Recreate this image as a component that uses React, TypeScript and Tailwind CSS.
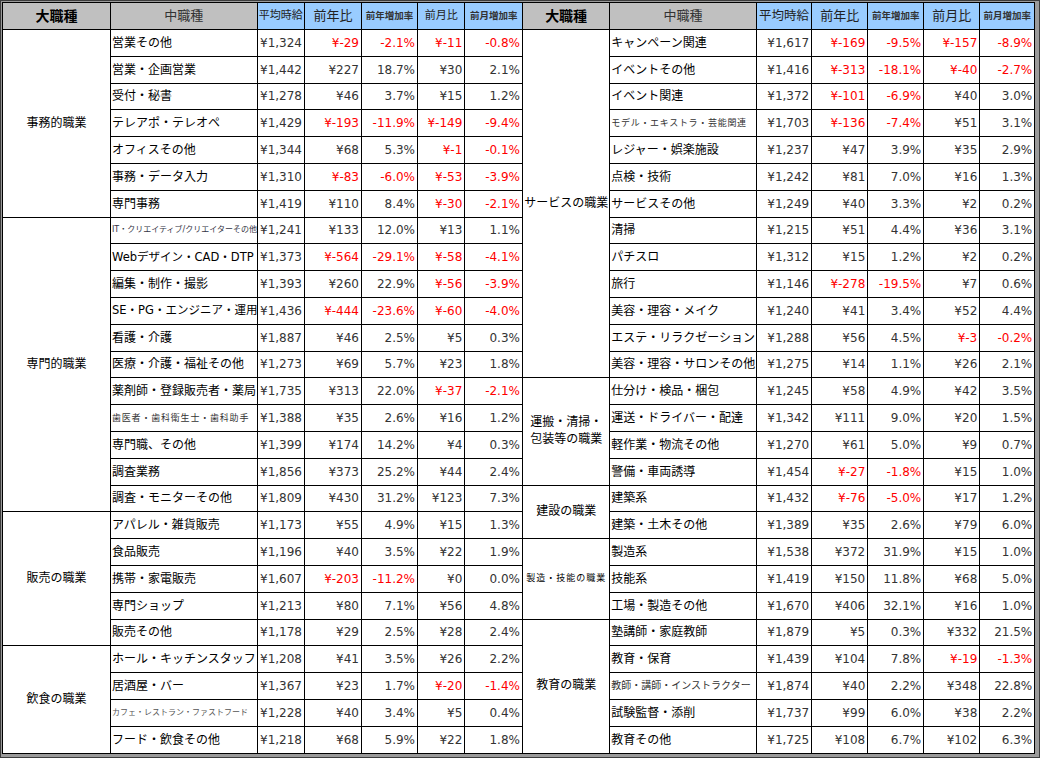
import React from "react";

type Row = [string, string, string, string, string, string];
type Group = { name: React.ReactNode; cls?: string; rows: Row[] };

const leftGroups: Group[] = [
  {
    name: "事務的職業",
    rows: [
      ["営業その他", "¥1,324", "¥-29", "-2.1%", "¥-11", "-0.8%"],
      ["営業・企画営業", "¥1,442", "¥227", "18.7%", "¥30", "2.1%"],
      ["受付・秘書", "¥1,278", "¥46", "3.7%", "¥15", "1.2%"],
      ["テレアポ・テレオペ", "¥1,429", "¥-193", "-11.9%", "¥-149", "-9.4%"],
      ["オフィスその他", "¥1,344", "¥68", "5.3%", "¥-1", "-0.1%"],
      ["事務・データ入力", "¥1,310", "¥-83", "-6.0%", "¥-53", "-3.9%"],
      ["専門事務", "¥1,419", "¥110", "8.4%", "¥-30", "-2.1%"],
    ],
  },
  {
    name: "専門的職業",
    rows: [
      ["IT・クリエイティブ/クリエイターその他", "¥1,241", "¥133", "12.0%", "¥13", "1.1%"],
      ["Webデザイン・CAD・DTP", "¥1,373", "¥-564", "-29.1%", "¥-58", "-4.1%"],
      ["編集・制作・撮影", "¥1,393", "¥260", "22.9%", "¥-56", "-3.9%"],
      ["SE・PG・エンジニア・運用", "¥1,436", "¥-444", "-23.6%", "¥-60", "-4.0%"],
      ["看護・介護", "¥1,887", "¥46", "2.5%", "¥5", "0.3%"],
      ["医療・介護・福祉その他", "¥1,273", "¥69", "5.7%", "¥23", "1.8%"],
      ["薬剤師・登録販売者・薬局", "¥1,735", "¥313", "22.0%", "¥-37", "-2.1%"],
      ["歯医者・歯科衛生士・歯科助手", "¥1,388", "¥35", "2.6%", "¥16", "1.2%"],
      ["専門職、その他", "¥1,399", "¥174", "14.2%", "¥4", "0.3%"],
      ["調査業務", "¥1,856", "¥373", "25.2%", "¥44", "2.4%"],
      ["調査・モニターその他", "¥1,809", "¥430", "31.2%", "¥123", "7.3%"],
    ],
  },
  {
    name: "販売の職業",
    rows: [
      ["アパレル・雑貨販売", "¥1,173", "¥55", "4.9%", "¥15", "1.3%"],
      ["食品販売", "¥1,196", "¥40", "3.5%", "¥22", "1.9%"],
      ["携帯・家電販売", "¥1,607", "¥-203", "-11.2%", "¥0", "0.0%"],
      ["専門ショップ", "¥1,213", "¥80", "7.1%", "¥56", "4.8%"],
      ["販売その他", "¥1,178", "¥29", "2.5%", "¥28", "2.4%"],
    ],
  },
  {
    name: "飲食の職業",
    rows: [
      ["ホール・キッチンスタッフ", "¥1,208", "¥41", "3.5%", "¥26", "2.2%"],
      ["居酒屋・バー", "¥1,367", "¥23", "1.7%", "¥-20", "-1.4%"],
      ["カフェ・レストラン・ファストフード", "¥1,228", "¥40", "3.4%", "¥5", "0.4%"],
      ["フード・飲食その他", "¥1,218", "¥68", "5.9%", "¥22", "1.8%"],
    ],
  },
];

const rightGroups: Group[] = [
  {
    name: "サービスの職業",
    rows: [
      ["キャンペーン関連", "¥1,617", "¥-169", "-9.5%", "¥-157", "-8.9%"],
      ["イベントその他", "¥1,416", "¥-313", "-18.1%", "¥-40", "-2.7%"],
      ["イベント関連", "¥1,372", "¥-101", "-6.9%", "¥40", "3.0%"],
      ["モデル・エキストラ・芸能関連", "¥1,703", "¥-136", "-7.4%", "¥51", "3.1%"],
      ["レジャー・娯楽施設", "¥1,237", "¥47", "3.9%", "¥35", "2.9%"],
      ["点検・技術", "¥1,242", "¥81", "7.0%", "¥16", "1.3%"],
      ["サービスその他", "¥1,249", "¥40", "3.3%", "¥2", "0.2%"],
      ["清掃", "¥1,215", "¥51", "4.4%", "¥36", "3.1%"],
      ["パチスロ", "¥1,312", "¥15", "1.2%", "¥2", "0.2%"],
      ["旅行", "¥1,146", "¥-278", "-19.5%", "¥7", "0.6%"],
      ["美容・理容・メイク", "¥1,240", "¥41", "3.4%", "¥52", "4.4%"],
      ["エステ・リラクゼーション", "¥1,288", "¥56", "4.5%", "¥-3", "-0.2%"],
      ["美容・理容・サロンその他", "¥1,275", "¥14", "1.1%", "¥26", "2.1%"],
    ],
  },
  {
    name: (
      <>
        運搬・清掃・
        <br />
        包装等の職業
      </>
    ),
    rows: [
      ["仕分け・検品・梱包", "¥1,245", "¥58", "4.9%", "¥42", "3.5%"],
      ["運送・ドライバー・配達", "¥1,342", "¥111", "9.0%", "¥20", "1.5%"],
      ["軽作業・物流その他", "¥1,270", "¥61", "5.0%", "¥9", "0.7%"],
      ["警備・車両誘導", "¥1,454", "¥-27", "-1.8%", "¥15", "1.0%"],
    ],
  },
  {
    name: "建設の職業",
    rows: [
      ["建築系", "¥1,432", "¥-76", "-5.0%", "¥17", "1.2%"],
      ["建築・土木その他", "¥1,389", "¥35", "2.6%", "¥79", "6.0%"],
    ],
  },
  {
    name: "製造・技能の職業",
    cls: "text-[9px] tracking-[1px] text-[#333]",
    rows: [
      ["製造系", "¥1,538", "¥372", "31.9%", "¥15", "1.0%"],
      ["技能系", "¥1,419", "¥150", "11.8%", "¥68", "5.0%"],
      ["工場・製造その他", "¥1,670", "¥406", "32.1%", "¥16", "1.0%"],
    ],
  },
  {
    name: "教育の職業",
    rows: [
      ["塾講師・家庭教師", "¥1,879", "¥5", "0.3%", "¥332", "21.5%"],
      ["教育・保育", "¥1,439", "¥104", "7.8%", "¥-19", "-1.3%"],
      ["教師・講師・インストラクター", "¥1,874", "¥40", "2.2%", "¥348", "22.8%"],
      ["試験監督・添削", "¥1,737", "¥99", "6.0%", "¥38", "2.2%"],
      ["教育その他", "¥1,725", "¥108", "6.7%", "¥102", "6.3%"],
    ],
  },
];

// small / squeezed labels, like Excel's shrink-to-fit
const nameCls: Record<string, string> = {
  "IT・クリエイティブ/クリエイターその他": "text-[8px] text-[#334]",
  "Webデザイン・CAD・DTP": "text-[11.5px]",
  "SE・PG・エンジニア・運用": "text-[11.5px]",
  "歯医者・歯科衛生士・歯科助手": "text-[9px] tracking-[0.8px] text-[#333]",
  "カフェ・レストラン・ファストフード": "text-[8px] text-[#555]",
  "モデル・エキストラ・芸能関連": "text-[9px] tracking-[0.7px] text-[#333]",
  "教師・講師・インストラクター": "text-[10px] text-[#333]",
};

type Flat = { group?: Group; row: Row };

function flatten(groups: Group[]): Flat[] {
  const out: Flat[] = [];
  groups.forEach((g) =>
    g.rows.forEach((r, i) => out.push({ group: i === 0 ? g : undefined, row: r })),
  );
  return out;
}

const left = flatten(leftGroups);
const right = flatten(rightGroups);

const isNeg = (v: string) => v.startsWith("-") || v.startsWith("¥-");

function Cells({ item }: { item: Flat }) {
  const [name, avg, yoy, yoyPct, mom, momPct] = item.row;
  return (
    <>
      {item.group && (
        <td
          rowSpan={item.group.rows.length}
          className={`border border-black text-center align-middle leading-[1.45] text-black ${
            item.group.cls ?? "text-[12px]"
          }`}
        >
          {item.group.name}
        </td>
      )}
      <td
        className={`overflow-hidden whitespace-nowrap border border-black pl-[1px] text-left ${
          nameCls[name] ?? "text-[12px] text-black"
        }`}
      >
        {name}
      </td>
      <td className="border border-black pr-[2px] text-right text-[12px] text-[#333]">{avg}</td>
      {[yoy, yoyPct, mom, momPct].map((v, i) => (
        <td
          key={i}
          className={`border border-black pr-[2px] text-right text-[12px] ${
            isNeg(v) ? "text-[#ff0000]" : "text-[#333]"
          }`}
        >
          {v}
        </td>
      ))}
    </>
  );
}

function HeadCells({ avgCls, monthCls }: { avgCls: string; monthCls: string }) {
  return (
    <>
      <th className="border border-black bg-[#c0c0c0] text-[14px] font-bold text-black">大職種</th>
      <th className="border border-black bg-[#c0c0c0] text-[13px] font-normal text-[#333]">中職種</th>
      <th className={`border border-black bg-[#99ccff] font-normal text-[#222] ${avgCls}`}>平均時給</th>
      <th className="border border-black bg-[#99ccff] text-[13px] font-normal text-[#222]">前年比</th>
      <th className="border border-black bg-[#99ccff] text-[9.5px] font-bold text-[#333]">前年増加率</th>
      <th className={`border border-black bg-[#99ccff] font-normal text-[#222] ${monthCls}`}>前月比</th>
      <th className="border border-black bg-[#99ccff] text-[9.5px] font-bold text-[#333]">前月増加率</th>
    </>
  );
}

export default function App() {
  return (
    <div className="h-[758px] w-[1040px] overflow-hidden border border-[#3c3c3c] bg-[#9a9a9a] pb-[3px] pl-[1px] pr-[2px] pt-[1px] font-['DejaVu_Sans','Noto_Sans_CJK_JP',sans-serif]">
      <table className="w-[1033px] table-fixed border-collapse bg-white">
        <colgroup>
          <col className="w-[108px]" />
          <col className="w-[146.5px]" />
          <col className="w-[47.5px]" />
          <col className="w-[57px]" />
          <col className="w-[56px]" />
          <col className="w-[47.3px]" />
          <col className="w-[57.7px]" />
          <col className="w-[87.3px]" />
          <col className="w-[146.7px]" />
          <col className="w-[55.3px]" />
          <col className="w-[56px]" />
          <col className="w-[56px]" />
          <col className="w-[56px]" />
          <col className="w-[55px]" />
        </colgroup>
        <thead>
          <tr className="h-[27px]">
            <HeadCells avgCls="text-[11px]" monthCls="text-[11px]" />
            <HeadCells avgCls="text-[12.5px]" monthCls="text-[13px]" />
          </tr>
        </thead>
        <tbody>
          {left.map((l, i) => (
            <tr key={i} className="h-[26.8px] leading-none">
              <Cells item={l} />
              <Cells item={right[i]} />
            </tr>
          ))}
        </tbody>
      </table>
    </div>
  );
}
